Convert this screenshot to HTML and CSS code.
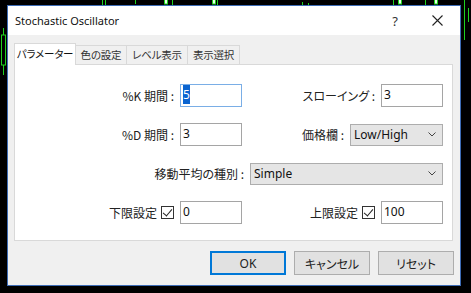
FILE: index.html
```html
<!DOCTYPE html>
<html lang="ja">
<head>
  <meta charset="UTF-8" />
  <title>Stochastic Oscillator</title>
  <link rel="stylesheet" href="styles.css">
</head>
<body>

<!-- チャートの背景 -->
<svg class="chart" width="471" height="293">
  <g stroke="#1fd11f" stroke-width="1">
    <line x1="102.5" y1="0" x2="102.5" y2="5" />
    <line x1="105.5" y1="0" x2="105.5" y2="5" />
    <line x1="135.5" y1="0" x2="135.5" y2="4" />
    <line x1="172.5" y1="0" x2="172.5" y2="5" />
    <line x1="217.5" y1="0" x2="217.5" y2="5" />
    <line x1="302.5" y1="2" x2="302.5" y2="5" />
    <line x1="308.5" y1="3" x2="308.5" y2="5" />
    <line x1="393.5" y1="0" x2="393.5" y2="5" />
    <line x1="425.5" y1="0" x2="425.5" y2="5" />
    <line x1="464.5" y1="0" x2="464.5" y2="40" />
    <line x1="468.5" y1="8" x2="468.5" y2="22" />
    <line x1="3.5" y1="28" x2="3.5" y2="75" />
  </g>
  <g fill="#e8ffe8" stroke="#1fd11f">
    <rect x="164.5" y="-1" width="3" height="5" />
    <rect x="212.5" y="-1" width="3" height="5" />
    <rect x="398.5" y="-1" width="3" height="5" />
    <rect x="434.5" y="-1" width="3" height="5" />
    <rect x="1.5" y="35" width="4" height="30" fill="#000" />
  </g>
</svg>

<div class="dialog">
  <div class="titlebar">
    <span class="title">Stochastic Oscillator</span>
    <span class="help">?</span>
    <svg class="close" width="11" height="11" viewBox="0 0 11 11">
      <path d="M0.5 0.5 L10.5 10.5 M10.5 0.5 L0.5 10.5" stroke="#222" stroke-width="1.1" fill="none" />
    </svg>
  </div>

  <div class="tabs">
    <div class="tab active">パラメーター</div>
    <div class="tab">色の設定</div>
    <div class="tab">レベル表示</div>
    <div class="tab">表示選択</div>
  </div>

  <div class="panel">
    <div class="row">
      <div class="label w-left">%K 期間 :</div>
      <div class="field focus"><span class="sel">5</span></div>
      <div class="label w-right">スローイング :</div>
      <div class="field">3</div>
    </div>

    <div class="row">
      <div class="label w-left">%D 期間 :</div>
      <div class="field">3</div>
      <div class="label w-price">価格欄 :</div>
      <div class="combo w-combo-s">
        <span>Low/High</span>
        <svg width="8" height="5" viewBox="0 0 8 5"><path d="M0.5 0.5 L4 4 L7.5 0.5" stroke="#444" fill="none" /></svg>
      </div>
    </div>

    <div class="row">
      <div class="label w-ma">移動平均の種別 :</div>
      <div class="combo w-combo-l">
        <span>Simple</span>
        <svg width="8" height="5" viewBox="0 0 8 5"><path d="M0.5 0.5 L4 4 L7.5 0.5" stroke="#444" fill="none" /></svg>
      </div>
    </div>

    <div class="row">
      <div class="label w-left">下限設定 <span class="check"></span></div>
      <div class="field">0</div>
      <div class="label w-right">上限設定 <span class="check"></span></div>
      <div class="field">100</div>
    </div>
  </div>

  <div class="buttons">
    <div class="btn default">OK</div>
    <div class="btn">キャンセル</div>
    <div class="btn">リセット</div>
  </div>
</div>

</body>
</html>
```

FILE: styles.css
```css
* {
  box-sizing: border-box;
}

body {
  margin: 0;
  width: 471px;
  height: 293px;
  overflow: hidden;
  position: relative;
  background: #000;
  font-family: "Noto Sans CJK JP", "Noto Sans", sans-serif;
  font-size: 12px;
  font-feature-settings: "palt";
  color: #1e1e1e;
}

.chart {
  position: absolute;
  top: 0;
  left: 0;
}

/* ダイアログ */
.dialog {
  position: relative;
  margin: 5px 0 0 7px;
  width: 454px;
  height: 281px;
  border: 1px solid #3d6cb5;
  background: #f0f0f0;
  display: flex;
  flex-direction: column;
}

.titlebar {
  height: 29px;
  background: #fff;
  display: flex;
  align-items: center;
  padding-left: 7px;
}

.title {
  font-family: "Noto Sans", sans-serif;
  font-size: 11px;
  color: #111;
  flex-grow: 1;
}

.help {
  font-family: "Noto Sans", sans-serif;
  font-size: 13px;
  color: #333;
  margin-right: 34px;
}

.close {
  margin-right: 17px;
}

/* タブ */
.tabs {
  display: flex;
  align-items: flex-end;
  height: 29px;
  padding-left: 7px;
}

.tab {
  height: 19px;
  padding: 0;
  font-size: 10.5px;
  letter-spacing: -0.2px;
  line-height: 18px;
  text-align: center;
  white-space: nowrap;
  background: #f0f0f0;
  border: 1px solid #d9d9d9;
  border-bottom: none;
  margin-left: -1px;
  color: #333;
}

.tab.active {
  height: 22px;
  margin-bottom: -1px;
  background: #fff;
  color: #111;
  position: relative;
  z-index: 1;
  line-height: 20px;
}

.tab:nth-child(1) { width: 62px; }
.tab:nth-child(2) { width: 52px; }
.tab:nth-child(3) { width: 62px; }
.tab:nth-child(4) { width: 53px; }

.panel {
  margin-left: 6px;
  width: 439px;
  height: 177px;
  background: #fff;
  border: 1px solid #d9d9d9;
  padding-top: 19px;
  display: flex;
  flex-direction: column;
  gap: 16px;
}

.row {
  display: flex;
  align-items: center;
  height: 23px;
}

.label {
  display: flex;
  align-items: center;
  justify-content: flex-end;
  gap: 4px;
  padding-right: 6px;
  white-space: nowrap;
  color: #222;
}

.w-left { width: 165px; }
.w-right { width: 139px; }
.w-price { width: 108px; }
.w-ma { width: 235px; }

.field {
  width: 62px;
  height: 23px;
  border: 1px solid #a5a5a5;
  background: #fff;
  padding: 1px 2px;
  line-height: 18px;
  font-family: "Noto Sans", sans-serif;
  color: #111;
}

.field.focus {
  border-color: #7aaee6;
}

.sel {
  background: #0a64d0;
  color: #fff;
  padding: 1px 0;
}

.combo {
  height: 22px;
  border: 1px solid #adadad;
  background: #e5e5e5;
  display: flex;
  align-items: center;
  justify-content: space-between;
  padding: 0 6px 0 3px;
  font-family: "Noto Sans", sans-serif;
  color: #111;
}

.w-combo-s { width: 93px; }
.w-combo-l { width: 193px; }

.check {
  display: inline-block;
  width: 13px;
  height: 13px;
  border: 1px solid #333;
  background: #fff;
  position: relative;
}

.check::after {
  content: "";
  position: absolute;
  left: 3px;
  top: 0px;
  width: 4px;
  height: 8px;
  border-right: 1px solid #222;
  border-bottom: 1px solid #222;
  transform: rotate(40deg);
}

/* ボタン */
.buttons {
  display: flex;
  justify-content: flex-end;
  gap: 8px;
  margin-top: 10px;
  padding-right: 6px;
}

.btn {
  width: 76px;
  height: 24px;
  border: 1px solid #adadad;
  background: #e1e1e1;
  display: flex;
  align-items: center;
  justify-content: center;
  color: #222;
}

.btn.default {
  border: 2px solid #0078d7;
  font-family: "Noto Sans", sans-serif;
}
```
